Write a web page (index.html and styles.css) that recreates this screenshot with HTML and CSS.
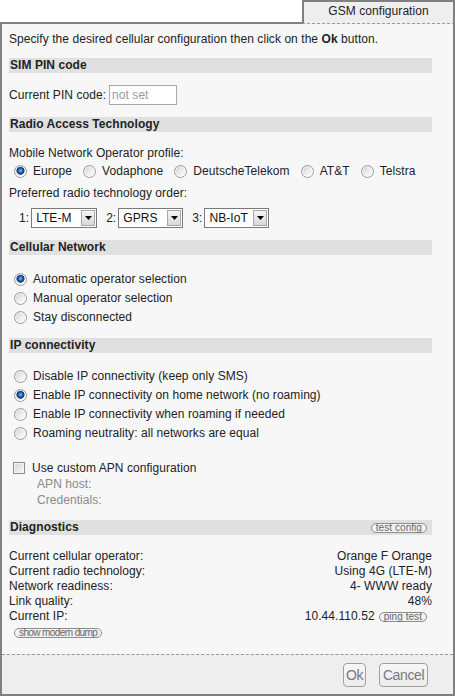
FILE: index.html
```html
<!DOCTYPE html>
<html>
<head>
<meta charset="utf-8">
<link rel="stylesheet" href="styles.css">
</head>
<body>
<div class="tabs">
  <div class="tab-fill"></div>
  <div class="tab">GSM configuration</div>
</div>
<div class="panel">
  <div class="content">
    <p class="intro">Specify the desired cellular configuration then click on the <b>Ok</b> button.</p>

    <div class="sec">SIM PIN code</div>
    <div class="pin-row">Current PIN code: <span class="input">not set</span></div>

    <div class="sec">Radio Access Technology</div>
    <div class="line mno-label">Mobile Network Operator profile:</div>
    <div class="opt-row">
      <span class="opt"><span class="radio on"></span>Europe</span>
      <span class="opt"><span class="radio"></span>Vodaphone</span>
      <span class="opt"><span class="radio"></span>DeutscheTelekom</span>
      <span class="opt"><span class="radio"></span>AT&amp;T</span>
      <span class="opt"><span class="radio"></span>Telstra</span>
    </div>
    <div class="line pref-label">Preferred radio technology order:</div>
    <div class="sel-row">
      <span class="num">1:</span>
      <span class="select w66"><span class="val">LTE-M</span><span class="arrow"><svg width="7" height="4" viewBox="0 0 7 4"><path d="M0 0H7L3.5 4Z" fill="#000"/></svg></span></span>
      <span class="num">2:</span>
      <span class="select w65"><span class="val">GPRS</span><span class="arrow"><svg width="7" height="4" viewBox="0 0 7 4"><path d="M0 0H7L3.5 4Z" fill="#000"/></svg></span></span>
      <span class="num">3:</span>
      <span class="select w65"><span class="val">NB-IoT</span><span class="arrow"><svg width="7" height="4" viewBox="0 0 7 4"><path d="M0 0H7L3.5 4Z" fill="#000"/></svg></span></span>
    </div>

    <div class="sec">Cellular Network</div>
    <div class="radios">
      <div class="ropt"><span class="radio on"></span>Automatic operator selection</div>
      <div class="ropt"><span class="radio"></span>Manual operator selection</div>
      <div class="ropt"><span class="radio"></span>Stay disconnected</div>
    </div>

    <div class="sec ip">IP connectivity</div>
    <div class="radios ipr">
      <div class="ropt"><span class="radio"></span>Disable IP connectivity (keep only SMS)</div>
      <div class="ropt"><span class="radio on"></span>Enable IP connectivity on home network (no roaming)</div>
      <div class="ropt"><span class="radio"></span>Enable IP connectivity when roaming if needed</div>
      <div class="ropt"><span class="radio"></span>Roaming neutrality: all networks are equal</div>
    </div>

    <div class="check-row"><span class="check"></span>Use custom APN configuration</div>
    <div class="sub">APN host:</div>
    <div class="sub">Credentials:</div>

    <div class="sec">Diagnostics<span class="pill">test config</span></div>
    <div class="diag">
      <div class="drow"><span>Current cellular operator:</span><span>Orange F Orange</span></div>
      <div class="drow"><span>Current radio technology:</span><span>Using 4G (LTE-M)</span></div>
      <div class="drow"><span>Network readiness:</span><span>4- WWW ready</span></div>
      <div class="drow"><span>Link quality:</span><span>48%</span></div>
      <div class="drow"><span>Current IP:</span><span class="ipval">10.44.110.52<span class="pill ping">ping test</span></span></div>
    </div>
    <div class="dump-row"><span class="pill dump">show modem dump</span></div>
  </div>
  <div class="footer">
    <span class="btn ok">Ok</span>
    <span class="btn cancel">Cancel</span>
  </div>
</div>
</body>
</html>
```
FILE: styles.css
```css
* { box-sizing: border-box; }
body {
  margin: 0;
  font: 12px/15px "Liberation Sans", Arial, sans-serif;
  letter-spacing: 0.06px;
  color: #222;
  background: #fff;
}
.tabs { display: flex; height: 24px; }
.tab-fill { flex: 1; border-bottom: 2px solid #808080; }
.tab {
  width: 153px;
  height: 24px;
  border: 2px solid #808080;
  border-bottom: 1px dashed #9a9a9a;
  background: #eeeeee;
  text-align: center;
  line-height: 19px;
}
.panel {
  height: 672px;
  border: 2px solid #808080;
  border-top: 0;
  background: #f7f7f7;
  display: flex;
  flex-direction: column;
}
.content { flex: 1; padding: 8px 21px 0 7px; }
.intro { margin: 0; line-height: 15px; }
.sec {
  margin-top: 11px;
  height: 15px;
  line-height: 15px;
  background: #e0e0e0;
  font-weight: bold;
  padding-left: 1px;
  display: flex;
  justify-content: space-between;
  align-items: center;
}
.pin-row + .sec, .sel-row + .sec, .sub + .sec { margin-top: 12px; }
.sec.ip { margin-top: 11px; }
.pin-row { margin-top: 12px; height: 20px; display: flex; align-items: center; gap: 3px; }
.input {
  width: 68px;
  height: 20px;
  border: 1px solid #a9a9a9;
  background: #fff;
  color: #9a9a9a;
  padding-left: 2px;
  line-height: 18px;
}
.mno-label { margin-top: 14px; }
.opt-row { margin-top: 1px; height: 18px; display: flex; align-items: center; padding-left: 5px; }
.opt { display: flex; align-items: center; }
.opt + .opt { margin-left: 11px; }
.radio {
  width: 13px;
  height: 13px;
  flex: none;
  border-radius: 50%;
  border: 1px solid #9c9c9c;
  background: linear-gradient(135deg, #cfcfcf 0%, #ececec 50%, #ffffff 100%);
  box-shadow: inset 0 0 0 1px rgba(255,255,255,0.6);
  margin-right: 6px;
}
.radio.on {
  background:
    radial-gradient(circle at 50% 42%, #9cc8f0 0, #2f75c0 1.6px, #0f4486 3.2px, #0c376b 3.8px, rgba(0,0,0,0) 4.3px),
    linear-gradient(135deg, #cfcfcf 0%, #ececec 50%, #ffffff 100%);
}
.pref-label { margin-top: 6px; }
.sel-row { margin-top: 7px; height: 20px; display: flex; align-items: center; padding-left: 10px; }
.num { margin-right: 2px; }
.select + .num { margin-left: 9px; }
.select {
  display: flex;
  align-items: stretch;
  height: 20px;
  border: 1px solid #7a7a7a;
  background: #fff;
  padding: 1px;
}
.w66 { width: 66px; }
.w65 { width: 65px; }
.select .val { flex: 1; padding-left: 3px; line-height: 16px; color: #111; }
.select .arrow {
  width: 14px;
  border: 1px solid #a8a8a8;
  background: linear-gradient(#f4f4f4, #d9d9d9);
  display: flex;
  align-items: center;
  justify-content: center;
}
.radios { margin-top: 15px; }
.radios.ipr { margin-top: 14px; }
.ropt { height: 19px; display: flex; align-items: center; padding-left: 5px; }
.check-row { margin-top: 17px; height: 16px; display: flex; align-items: center; padding-left: 4px; }
.check {
  width: 12px;
  height: 12px;
  flex: none;
  border: 1px solid #8e8e8e;
  background: linear-gradient(135deg, #d6d6d6, #f7f7f7);
  box-shadow: inset 0 0 0 1px #f2f2f2;
  margin-right: 7px;
}
.sub { line-height: 16px; padding-left: 28px; color: #8a8a8a; }
.pill {
  display: inline-block;
  height: 10px;
  line-height: 8px;
  padding: 0 4px;
  border: 1px solid #8c8c8c;
  border-radius: 5px;
  background: #f2f2f2;
  color: #666;
  font-size: 10px;
  font-weight: normal;
  margin-right: 5px;
}
.diag { margin-top: 14px; }
.drow { display: flex; justify-content: space-between; line-height: 15px; }
.ipval { display: flex; align-items: center; }
.ping { margin-left: 4px; }
.dump-row { margin-top: 4px; height: 10px; display: flex; padding-left: 5px; }
.dump { letter-spacing: -0.6px; }
.footer {
  height: 40px;
  border-top: 1px dashed #999;
  background: #eeeeee;
  display: flex;
  justify-content: flex-end;
  gap: 13px;
  padding: 8px 25px 0 0;
}
.btn {
  height: 24px;
  border: 1px solid #a0a0a0;
  border-radius: 4px;
  background: linear-gradient(#f7f7f7, #ececec);
  color: #777;
  font-size: 14px;
  letter-spacing: -0.4px;
  line-height: 22px;
  text-align: center;
}
.ok { width: 23px; }
.cancel { width: 49px; }
```
